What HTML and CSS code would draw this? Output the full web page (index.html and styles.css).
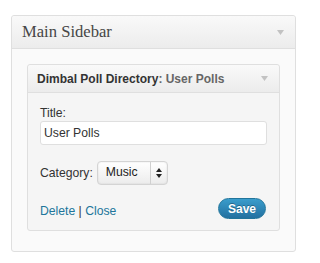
FILE: index.html
```html
<!DOCTYPE html>
<html>
<head>
<meta charset="utf-8">
<link rel="stylesheet" href="styles.css">
</head>
<body>
<div class="sidebar">
  <div class="sidebar-head">
    <h3 class="sidebar-title">Main Sidebar</h3>
    <svg class="toggle" width="7" height="5" viewBox="0 0 7 5"><path d="M0 0H7L3.5 5Z" fill="#c2c2c2"/></svg>
  </div>
  <div class="sidebar-body">
    <div class="widget">
      <div class="widget-head">
        <h4 class="widget-title">Dimbal Poll Directory<span class="in-title">: User Polls</span></h4>
        <svg class="toggle" width="7" height="5" viewBox="0 0 7 5"><path d="M0 0H7L3.5 5Z" fill="#c2c2c2"/></svg>
      </div>
      <div class="widget-inside">
        <label class="field-label">Title:</label>
        <div class="text-input">User Polls</div>
        <div class="cat-row">
          <span class="cat-label">Category:</span>
          <div class="select">
            <span class="select-value">Music</span>
            <span class="select-arrows">
              <svg width="6" height="10" viewBox="0 0 6 10"><path d="M3 0L6 4H0Z M0 6H6L3 10Z" fill="#222"/></svg>
            </span>
          </div>
        </div>
        <div class="actions">
          <div class="links"><a class="link">Delete</a> | <a class="link">Close</a></div>
          <button class="save">Save</button>
        </div>
      </div>
    </div>
  </div>
</div>
</body>
</html>
```
FILE: styles.css
```css
html, body {
  margin: 0;
  padding: 0;
  background: #ffffff;
}
body {
  padding: 15px 0 0 11px;
  font-family: "Liberation Sans", Arial, sans-serif;
  font-size: 12.2px;
  color: #333;
}
.sidebar {
  width: 283px;
  border: 1px solid #dfdfdf;
  border-radius: 3px;
  background: #fafafa;
}
.sidebar-head {
  height: 32px;
  border-bottom: 1px solid #dfdfdf;
  background: linear-gradient(#f9f9f9, #ececec);
  border-radius: 3px 3px 0 0;
  display: flex;
  align-items: center;
  justify-content: space-between;
  padding: 0 11px 0 10px;
}
.sidebar-title {
  margin: 0;
  font-family: "Liberation Serif", "Times New Roman", serif;
  font-weight: normal;
  font-size: 16.6px;
  color: #464646;
  padding-bottom: 1px;
}
.sidebar-body {
  padding: 15px 15px 20px 15px;
}
.widget {
  border: 1px solid #dfdfdf;
  border-radius: 3px;
  background: #f5f5f5;
}
.widget-head {
  height: 27px;
  border-bottom: 1px solid #dfdfdf;
  background: linear-gradient(#f9f9f9, #ececec);
  border-radius: 3px 3px 0 0;
  display: flex;
  align-items: center;
  justify-content: space-between;
  padding: 0 11px 0 9px;
}
.widget-title {
  margin: 0;
  font-size: 12px;
  font-weight: bold;
  color: #333;
}
.in-title {
  font-weight: bold;
  color: #666;
}
.widget-inside {
  padding: 12px 12px 11px 12px;
}
.field-label {
  display: block;
  line-height: 16px;
  color: #333;
}
.text-input {
  height: 22px;
  line-height: 22px;
  border: 1px solid #dfdfdf;
  border-radius: 3px;
  background: #fff;
  padding-left: 3px;
  color: #333;
}
.cat-row {
  display: flex;
  align-items: center;
  margin-top: 16px;
  gap: 4px;
}
.cat-label {
  color: #333;
}
.select {
  width: 69px;
  height: 22px;
  border: 1px solid #d4d4d4;
  border-radius: 4px;
  background: linear-gradient(#ffffff, #ececec);
  box-shadow: inset 0 0 2px rgba(0,0,0,0.12);
  display: flex;
  align-items: stretch;
}
.select-value {
  flex: 1;
  padding-left: 8px;
  line-height: 20px;
  color: #222;
}
.select-arrows {
  width: 16px;
  border-left: 1px solid #d0d0d0;
  display: flex;
  align-items: center;
  justify-content: center;
}
.actions {
  margin-top: 13px;
  display: flex;
  align-items: center;
  justify-content: space-between;
}
.links {
  color: #333;
  padding-top: 5px;
}
.link {
  color: #21759b;
  text-decoration: none;
}
.save {
  width: 48px;
  height: 21px;
  border: 1px solid #21759b;
  border-radius: 11px;
  background: linear-gradient(#3a9dcc, #2370a0);
  color: #fff;
  font-family: "Liberation Sans", Arial, sans-serif;
  font-weight: bold;
  font-size: 12px;
  text-shadow: 0 -1px 0 rgba(0,0,0,0.3);
  padding: 0;
  margin-right: 1px;
}
```
